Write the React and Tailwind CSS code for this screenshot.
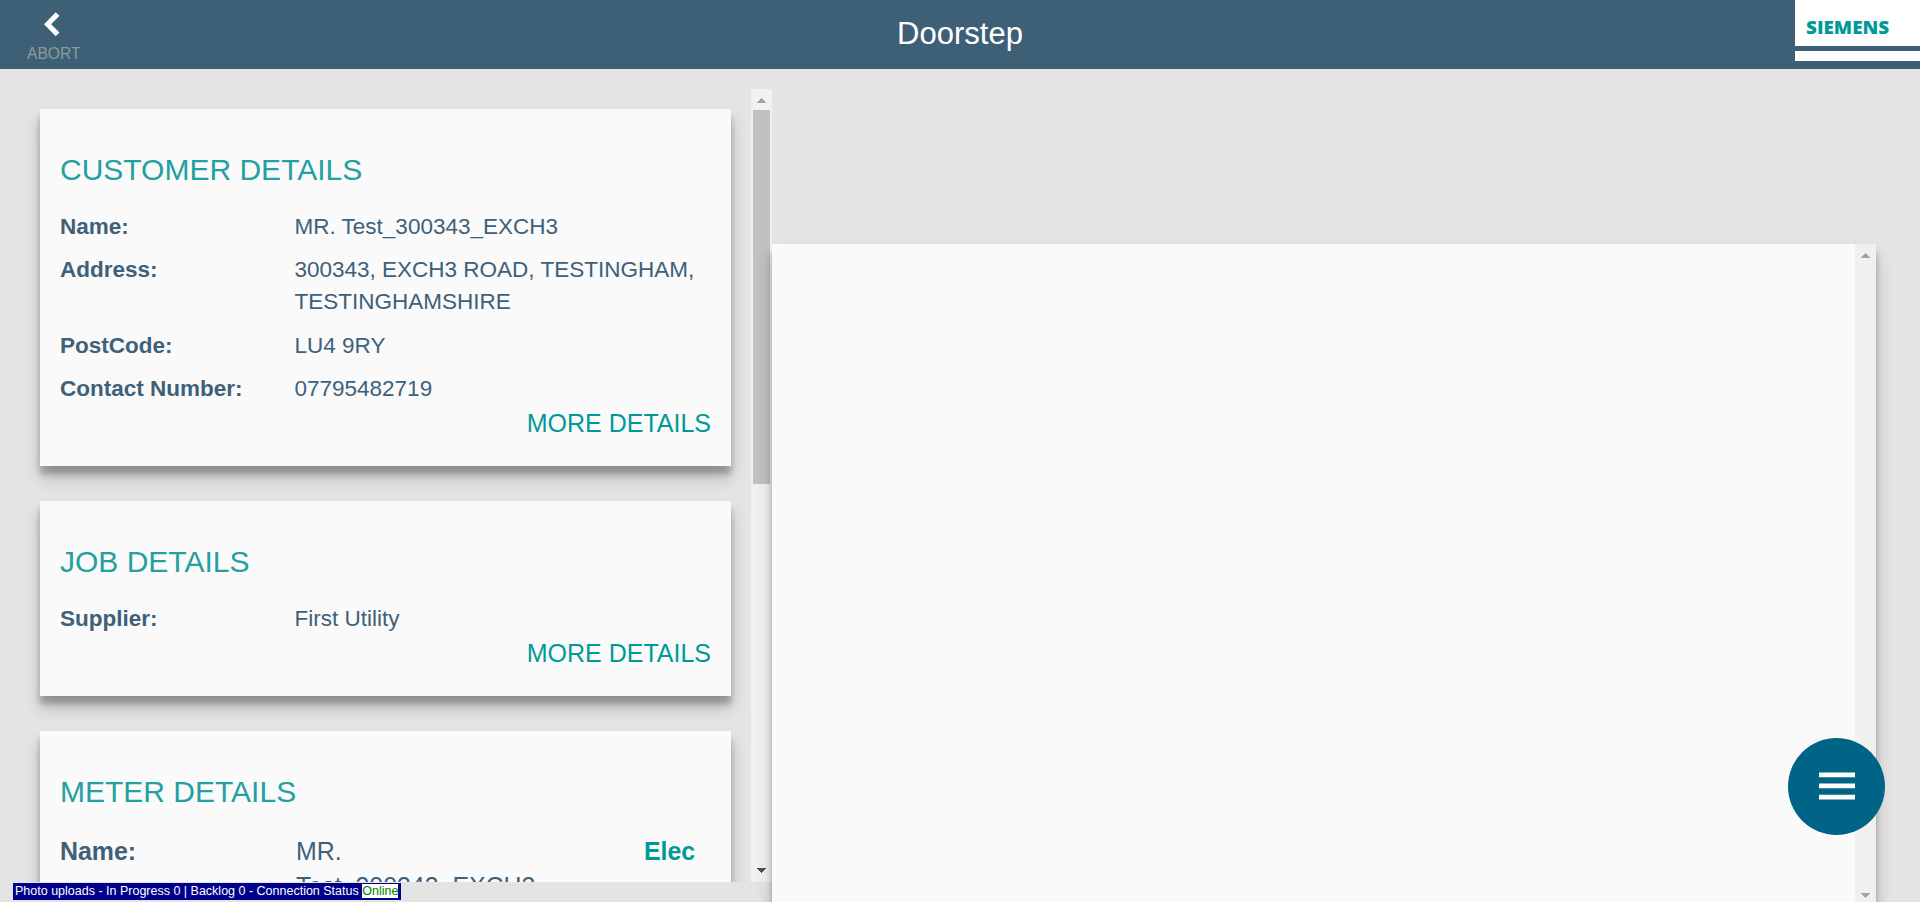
const SHADOW = "shadow-[0_12px_16px_rgba(0,0,0,0.19),0_8px_6px_rgba(0,0,0,0.24)]";

function Triangle({ up, className }) {
  return (
    <svg width="9" height="5" viewBox="0 0 9 5" shapeRendering="crispEdges" className={className}>
      <path fill="currentColor" d={up ? "M4 0h1v1h1v1h1v1h1v1h1v1H0V4h1V3h1V2h1V1h1z" : "M0 0h9v1H8v1H7v1H6v1H5v1H4V4H3V3H2V2H1V1H0z"} />
    </svg>
  );
}

function Card({ title, children }) {
  return (
    <section className={`bg-[#fafafa] px-[20px] pt-[39px] ${SHADOW}`}>
      <h2 className="text-[30px] leading-[43px] text-[#23a0a0]">{title}</h2>
      {children}
    </section>
  );
}

function Rows({ items }) {
  return (
    <dl className="mt-[20px] flex flex-col gap-[11.4px] text-[22.5px] leading-[32px]">
      {items.map(([label, value]) => (
        <div key={label} className="flex">
          <dt className="w-[234.5px] shrink-0 font-bold">{label}</dt>
          <dd className="w-[416px]">{value}</dd>
        </div>
      ))}
    </dl>
  );
}

function MoreDetails() {
  return <div className="pt-px pb-[25px] text-right text-[25px] leading-[35px] text-[#009999]">MORE DETAILS</div>;
}

export default function App() {
  return (
    <div className="flex h-[902px] w-[1920px] flex-col overflow-hidden bg-[#e4e4e4] font-['Liberation_Sans',Arial,sans-serif] text-[#3e6079]">
      <header className="flex h-[69px] shrink-0 items-start justify-between bg-[#3e6077]">
        <button className="flex w-[200px] flex-col items-start pl-[27px] pt-[12px]">
          <svg width="17" height="25" viewBox="0 0 17 25" className="ml-[17px]">
            <path d="M13.6 2 3.6 12.2 13.6 22.4" fill="none" stroke="#fff" strokeWidth="5.2" />
          </svg>
          <span className="mt-[8px] text-[15.6px] leading-[18px] text-[#8b9a9b]">ABORT</span>
        </button>
        <h1 className="pt-[12px] text-[31px] leading-[44px] text-white">Doorstep</h1>
        <div className="flex w-[200px] flex-col items-end">
          <div className="flex h-[46px] w-[125px] items-center bg-white pl-[11px] pt-[8px] font-['Open_Sans',sans-serif] text-[17.5px] leading-[20px] font-extrabold text-[#009999]">
            <span className="origin-left scale-x-[1.08]">SIEMENS</span>
          </div>
          <div className="mt-[5px] h-[10px] w-[125px] bg-white" />
        </div>
      </header>

      <div className="flex min-h-0 flex-1">
        <aside className="mt-[20px] flex h-[793px] w-[772px] shrink-0 overflow-hidden">
          <div className="flex w-[751px] flex-col gap-[35px] overflow-hidden pt-[20px] pr-[20px] pl-[40px]">
            <Card title="CUSTOMER DETAILS">
              <Rows
                items={[
                  ["Name:", "MR. Test_300343_EXCH3"],
                  ["Address:", "300343, EXCH3 ROAD, TESTINGHAM, TESTINGHAMSHIRE"],
                  ["PostCode:", "LU4 9RY"],
                  ["Contact Number:", "07795482719"],
                ]}
              />
              <MoreDetails />
            </Card>
            <Card title="JOB DETAILS">
              <Rows items={[["Supplier:", "First Utility"]]} />
              <MoreDetails />
            </Card>
            <Card title="METER DETAILS">
              <div className="mt-[21px] flex pb-[40px] text-[24.9px] leading-[35px]">
                <div className="w-[236px] font-bold">Name:</div>
                <div className="w-[348px]">
                  MR.
                  <br />
                  Test_300343_EXCH3
                </div>
                <div className="font-bold text-[#009999]">Elec</div>
              </div>
            </Card>
          </div>
          <div className="flex w-[21px] flex-col items-center bg-[#f1f1f1] pt-[9px]">
            <Triangle up className="text-[#a3a3a3]" />
            <div className="mt-[7px] h-[374px] w-[17px] bg-[#c1c1c1]" />
            <Triangle className="mt-auto mb-[9px] text-[#505050]" />
          </div>
        </aside>

        <main className={`mt-[175px] flex h-[658px] w-[1104px] justify-end bg-[#fafafa] ${SHADOW}`}>
          <div className="flex w-[21px] flex-col items-center justify-between bg-[#f0f0f0] pt-[9px] pb-[4px]">
            <Triangle up className="text-[#a3a3a3]" />
            <Triangle className="text-[#a3a3a3]" />
          </div>
        </main>
      </div>

      <div className="absolute top-[883px] left-[13px] flex h-[17px] w-[388px] items-start bg-[#00008b] pt-px pl-[2px] text-[12.5px] leading-[14px] whitespace-nowrap text-white">
        Photo uploads - In Progress 0 | Backlog 0 - Connection Status&nbsp;
        <span className="bg-white text-[#008000]">Online</span>
      </div>

      <button className="absolute top-[737.5px] left-[1788px] flex size-[97px] items-center justify-center rounded-full bg-[#006487]">
        <svg width="36" height="28" viewBox="0 0 36 28">
          <path fill="#fff" d="M0 .5h36v4.7H0zM0 11.6h36v4.7H0zM0 22.7h36v4.7H0z" />
        </svg>
      </button>
    </div>
  );
}
